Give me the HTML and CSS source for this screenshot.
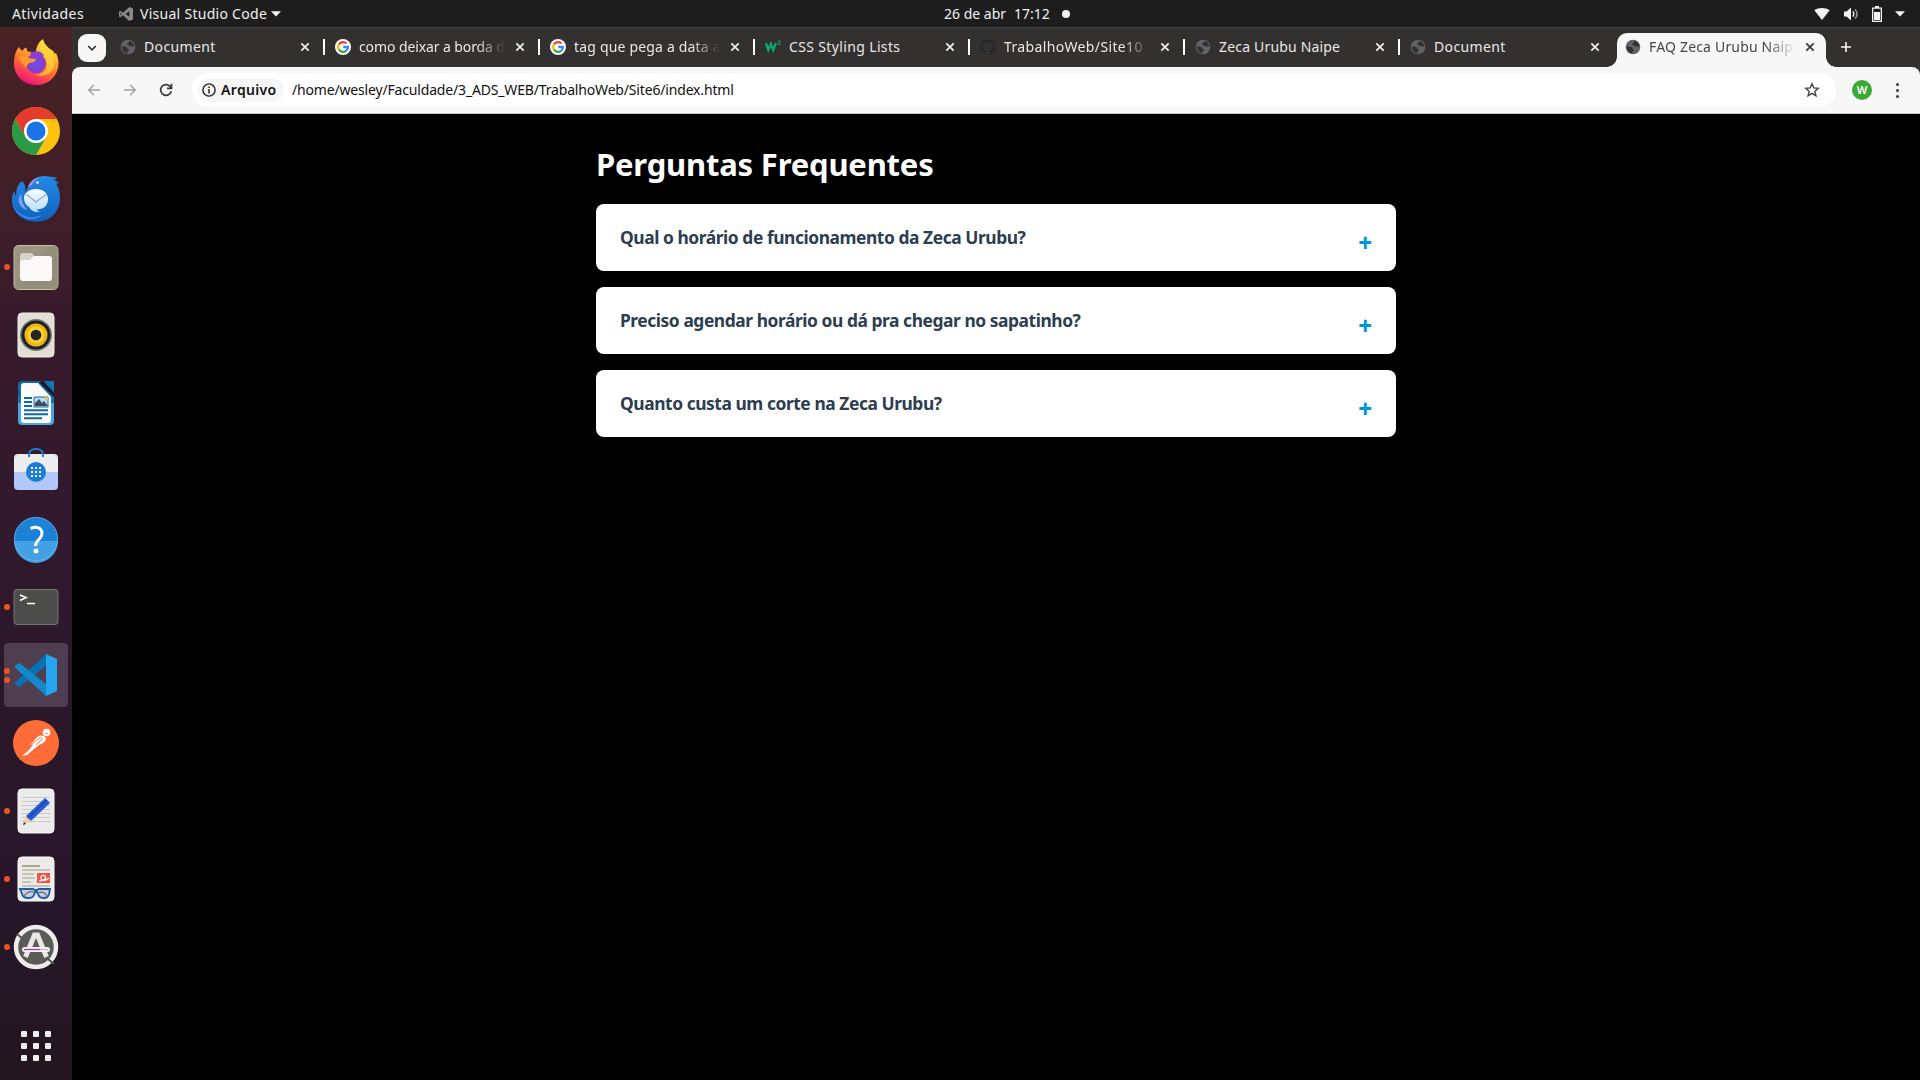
FILE: index.html
```html
<!DOCTYPE html>
<html lang="pt-BR">
<head>
<meta charset="utf-8">
<title>FAQ Zeca Urubu Naipe</title>
<link rel="stylesheet" href="styles.css">
</head>
<body>
<svg class="defs" width="0" height="0">
  <symbol id="globe" viewBox="0 0 16 16"><circle cx="8" cy="8" r="7.300" fill="currentColor"/><path class="land" d="M1.900 7.600C4 7.200 5.800 7.400 7 8.400c.8.800.2 1.500 1.300 1.800 1.300.4 1 1.500-.2 1.800-.9.200-.6 1.200-.9 2.200C4 14 1.800 11.300 1.900 7.600z"/><path class="land" d="M9.700 2.100C12.300 2.800 14 5 14.200 7.400c-.9.500-1.700.3-2.300-.4-.9.700-2.200.700-2.900-.4-.3-.7-1.600-.2-1.900-1.200-.3-1.100.9-1.100 1.400-1.700.5-.5.300-1 1.200-1.600z"/></symbol>
  <symbol id="close" viewBox="0 0 10 10"><path d="M1.300 1.300l7.400 7.400M8.700 1.300l-7.400 7.400" stroke="currentColor" stroke-width="1.700" fill="none"/></symbol>
  <symbol id="google" viewBox="0 0 16 16"><circle cx="8" cy="8" r="8" fill="#fff"/><g fill="none" stroke-width="2.300"><path d="M4 5.300A4.900 4.900 0 0 1 11.500 4.500" stroke="#ea4335"/><path d="M4 5.300a4.900 4.900 0 0 0 0 5.400" stroke="#fbbc05"/><path d="M4 10.700a4.900 4.900 0 0 0 7.300.900" stroke="#34a853"/><path d="M11.300 11.600A4.900 4.900 0 0 0 12.900 8H8.200" stroke="#4285f4"/></g></symbol>
</svg>

<header class="topbar">
  <span class="activities">Atividades</span>
  <div class="app-menu">
    <svg width="16" height="16" viewBox="0 0 16 16"><path d="M11.300 1L15 2.500v11L11.300 15 5 9.200 2.300 11.300 1 10.600V5.400l1.300-.700L5 6.800zM11.300 5.200L7.500 8l3.800 2.800zM2.400 6.500v3L3.900 8z" fill="#8a8a8a" fill-rule="evenodd"/></svg>
    <span class="app-name">Visual Studio Code</span>
    <svg width="10" height="6" viewBox="0 0 10 6"><path d="M0 .3h10L5 5.500z" fill="#f2f2f2"/></svg>
  </div>
  <div class="clock"><span class="date">26 de abr</span><span class="time">17:12</span><i class="notice"></i></div>
  <div class="status">
    <svg width="16" height="14" viewBox="0 0 16 14"><path d="M.3 3.300C4.500.100 11.500.100 15.700 3.300L8 13z" fill="#f2f2f2"/></svg>
    <svg width="16" height="14" viewBox="0 0 16 14"><path d="M1 4.500h2.500L8 .6v12.800L3.500 9.500H1z" fill="#f2f2f2"/><path d="M9.800 4.300c1.300 1.600 1.300 3.800 0 5.400" stroke="#f2f2f2" stroke-width="1.300" fill="none"/><path d="M12 2.300c2.500 2.900 2.500 6.500 0 9.400" stroke="#a5a5a5" stroke-width="1.300" fill="none"/></svg>
    <svg width="10" height="16" viewBox="0 0 10 16"><path d="M3 0h4v1.500h3V16H0V1.500h3zM1.300 2.800v11.900h7.400V2.800z" fill="#f2f2f2" fill-rule="evenodd"/><path d="M2 6h6v8H2z" fill="#f2f2f2"/></svg>
    <svg width="10" height="6" viewBox="0 0 10 6"><path d="M0 .3h10L5 5.500z" fill="#f2f2f2"/></svg>
  </div>
</header>

<div class="desktop">
<nav class="dock">
  <div class="app"><svg width="48" height="48" viewBox="0 0 48 48">
    <defs><linearGradient id="ff" x1=".8" y1="0" x2=".35" y2="1"><stop offset="0" stop-color="#fff44f"/><stop offset=".35" stop-color="#ffb32c"/><stop offset=".62" stop-color="#ff6a30"/><stop offset="1" stop-color="#f0107c"/></linearGradient><radialGradient id="ffc" cx=".5" cy=".55" r=".6"><stop offset="0" stop-color="#6a50e8"/><stop offset="1" stop-color="#9a35c0"/></radialGradient></defs>
    <path d="M7 8c1 2 2.500 3 3.500 4 .5-2 2-3 4-3.600 0 2 .5 3.200 1.500 4.200l8 1C24 8 26.500 3 31 0c1 5 4 7 7 10 2 1 4 2 4.500 5l1.500-1c2 4 3 9 2.300 13C45 38 36 46 24.500 46 11 46 2 36 2 24.500 2 17 4 11 7 8z" fill="url(#ff)"/>
    <circle cx="24" cy="24.500" r="10" fill="url(#ffc)"/>
    <path d="M18 14c5-3 12-2 15 3l-3-.5 2 3c-4-3-8-3.500-12-2z" fill="#8c3bd6"/>
    <path d="M7 17c4-1.500 8 0 11 2.500l6 .5c0 2-2 3-6 4-2 .6-3 2-3.500 4.500C11 26 8 23 7 17z" fill="#ff9a28"/>
    <path d="M31 1c-3 4-4 7-2 11 1 3 5 6 6 12 .5 8-6 13-13 11 8 4 18 1 20-8 1-6-1-10-4-14-2-4-6-6-7-12z" fill="#ffd93c" opacity=".7"/></svg></div>
  <div class="app"><svg width="48" height="48" viewBox="0 0 48 48"><circle cx="24" cy="24" r="24" fill="#ffc20e"/><path d="M3.200 12A24 24 0 0 0 24 48L34.400 30 24 24 13.600 30z" fill="#2a9a47"/><path d="M24 12h20.800A24 24 0 0 0 3.200 12l10.400 18z" fill="#e33b2e"/><circle cx="24" cy="24" r="12" fill="#fff"/><circle cx="24" cy="24" r="9.500" fill="#1a73e8"/></svg></div>
  <div class="app"><svg width="48" height="48" viewBox="0 0 48 48">
    <defs><linearGradient id="tb" x1="0" y1="0" x2="0" y2="1"><stop offset="0" stop-color="#2489e4"/><stop offset="1" stop-color="#1062bd"/></linearGradient><linearGradient id="tbe" x1="0" y1="0" x2="0" y2="1"><stop offset="0" stop-color="#fafdff"/><stop offset="1" stop-color="#b5defb"/></linearGradient></defs>
    <path d="M16 12C18 5 25 1 32 1c5 0 9 1 13 2-1 1-2 1.500-4 1.500 3 1 5 3 6 4h-3c2 3 4 8 4 14 0 14-9 24-23 24C11 47 1 38 0 27c-.5-6 1-9 2-11l2 5C4 13 7 8 10 6c3 3 5 8 2 14z" fill="url(#tb)"/><path d="M1 30c5 11 17 15 29 10-8 8-25 4-29-10z" fill="#3a8cec"/><path d="M16 12c2-5 6-9 13-10-5 2-7 4-9 8z" fill="#b18be8"/><path d="M6.500 24c1-3 2-4 3-5 0 7 2 12 6 16-5-1-9-5-9-11z" fill="#7d9cf3"/>
    <circle cx="25.500" cy="7.500" r="1.300" fill="#e8f5ff"/><path d="M12 23c0-5 5-9 12-9s12 4 12 10c0 7-5 10.500-11 10.500 0 1 1.500 2 3 2.500-6 .5-9-1.500-11-5-3-1.500-5-5-5-9z" fill="url(#tbe)"/><path d="M14 19l10 8 11-8" fill="none" stroke="#8eaac9" stroke-width="1.100"/></svg></div>
  <div class="app one"><svg width="48" height="48" viewBox="0 0 48 48"><rect x="2" y="2.500" width="44" height="44" rx="4.500" fill="#9d9582" stroke="#c5bdab"/><path d="M3 40L38 3h5q3 0 3 3v37q0 3-3 3H6q-3 0-3-3z" fill="#8c8574" opacity=".45"/><path d="M8 13q0-3 3-3h8q2 0 3 3l2 3v8H8z" fill="#d7d3c8"/><path d="M8 20q0-3 3-3h7l4-4h15q3 0 3 3v19q0 3-3 3H11q-3 0-3-3z" fill="#faf9f7"/></svg></div>
  <div class="app"><svg width="48" height="48" viewBox="0 0 48 48"><rect x="6" y="2" width="36" height="44" rx="4" fill="#e3dfd4" stroke="#f2efea"/><circle cx="24" cy="24" r="16" fill="#777b82"/><circle cx="24" cy="24" r="14.500" fill="#202027"/><circle cx="24" cy="24" r="11.500" fill="#edb70f"/><circle cx="24" cy="24" r="8.500" fill="#f6cf3a"/><circle cx="24" cy="24" r="5.300" fill="#252527"/></svg></div>
  <div class="app"><svg width="48" height="48" viewBox="0 0 48 48"><path d="M10 2h29q3 0 3 3v16H6V6q0-4 4-4z" fill="#1268a0"/><path d="M6 24h36v18q0 4-4 4H10q-4 0-4-4z" fill="#46a8d8"/><path d="M6 18h36v6H6z" fill="#1775ad"/><path d="M9 7q0-3 3-3h14l13 14v23q0 3-3 3H12q-3 0-3-3z" fill="#fbfbfb"/><path d="M27 3l15 15v-4L31 2z" fill="#1b1520"/><path d="M33 2h9v9z" fill="#1675ad"/><path d="M12 19h8M12 23h8M12 27h8M12 31.300h24M12 35.300h24M12 39.300h18" stroke="#1269a2" stroke-width="2"/><path d="M22 18h14v10H22z" fill="#b6dcfa" stroke="#176ca6"/><path d="M23 27v-3l4-4 3 4 2-2 4 5z" fill="#454b55"/><path d="M32 18h4v4z" fill="#f4b928"/></svg></div>
  <div class="app"><svg width="48" height="48" viewBox="0 0 48 48"><path d="M2 25V11q0-4 4-4h36q4 0 4 4v14z" fill="#eeeded"/><path d="M2 25h44v14q0 4-4 4H6q-4 0-4-4z" fill="#b3c8fa"/><path d="M17 10V8q0-6 7-6t7 6v2" fill="none" stroke="#1c7fd3" stroke-width="1.900"/><circle cx="24" cy="25" r="10" fill="#1c7fd3"/><path d="M19 21h10M19 25h10M19 29h10" stroke="#fff" stroke-width="2" stroke-dasharray="2 2.100"/></svg></div>
  <div class="app"><svg width="48" height="48" viewBox="0 0 48 48"><circle cx="24" cy="24" r="22" fill="#1b82d5"/><path d="M2 26h44a22 22 0 0 1-44 0z" fill="#42a0e3"/><circle cx="24" cy="24" r="21.600" fill="none" stroke="#6fb8ec" stroke-width=".7"/><path d="M18.500 13.500c6-2.500 11.500-1 11.500 5 0 6-6.500 6-6.500 12.500" fill="none" stroke="#fff" stroke-width="3"/><circle cx="24" cy="36" r="2.500" fill="#fff"/></svg></div>
  <div class="app one"><svg width="48" height="48" viewBox="0 0 48 48"><rect x="2" y="6.500" width="44" height="35" rx="3" fill="#4c4c4a" stroke="#747472"/><path d="M8 12l6 2.500L8 17.500" fill="none" stroke="#fff" stroke-width="1.700"/><path d="M15 20.500h8" stroke="#fff" stroke-width="1.500"/></svg></div>
  <div class="app two active"><svg width="48" height="48" viewBox="0 0 48 48"><path d="M3 31.500L34 3v12L8 35.500q-1 1-2.200 0L3 33q-.8-.8 0-1.500z" fill="#0871b4"/><path d="M3 16.500L34 45V33L8 12.500q-1-1-2.200 0L3 15q-.8.800 0 1.500z" fill="#1488cd"/><path d="M34 3l11 5v32l-11 5z" fill="#27a4f0"/></svg></div>
  <div class="app"><svg width="48" height="48" viewBox="0 0 48 48"><circle cx="24" cy="24" r="23" fill="#ff6c37"/><circle cx="34.500" cy="13.500" r="3.800" fill="#fff"/><path d="M32 17c-5-2-8 2-10 5l-4 4 3 0-5 6-6 5 5-1 7-6 5-4 4-2c3-2 4-5 1-7z" fill="#fff"/><path d="M19 26l10-8M24 26l7-7M33 14l3 1" stroke="#ff6c37" stroke-width=".9"/></svg></div>
  <div class="app one"><svg width="48" height="48" viewBox="0 0 48 48"><rect x="6" y="2" width="36" height="44" rx="4" fill="#ebebea" stroke="#fafafa"/><path d="M10 10.500h28M10 14.500h28M10 18.500h28M10 22.500h28M10 26.500h28M10 30.500h28M10 34.500h28" stroke="#c9c9c9"/><path d="M11 38l3-9 5 5z" fill="#f5c9a2"/><path d="M14 29l19-18 5 5-19 18z" fill="#2c5cd8"/><path d="M16 31l19-18" stroke="#1746ae" stroke-width="1.500"/><path d="M11 38l1-3 2 2z" fill="#333"/></svg></div>
  <div class="app one"><svg width="48" height="48" viewBox="0 0 48 48"><rect x="6" y="2" width="36" height="44" rx="4" fill="#ecebe8" stroke="#fafafa"/><path d="M10 11h18" stroke="#aaa48f" stroke-width="2"/><path d="M10 15h28M10 19h12M10 23h13M10 27h9M10 31h28" stroke="#c7c3b8" stroke-width="2"/><path d="M25 18h13v10H25z" fill="#f35244"/><path d="M27 26c5 0 8-3 6-5-3-2-5 1-4 3s5 2 8-1" fill="none" stroke="#fff" stroke-width="1.200"/><path d="M8 34h13l2 1h2l2-1h11l-1 5q-1 4-5 4t-5-2l-2-4h-2l-1 3q-1 3-6 3t-6-4z" fill="#c9cdd5" stroke="#1d5cad" stroke-width="1.800"/><path d="M12 41c3-4 7-5 10-4m4 1c4-2 7-1 9 3" fill="none" stroke="#666a70" stroke-width="1.200"/></svg></div>
  <div class="app one"><svg width="48" height="48" viewBox="0 0 48 48"><circle cx="24" cy="24" r="20" fill="#5a5a58" stroke="#eeedec" stroke-width="4.500"/><path d="M5 11l6 5M36 36l6 5" stroke="#555" stroke-width="2"/><path d="M13.500 34L22.500 12h3l9 22" fill="none" stroke="#e9e8e7" stroke-width="5"/><path d="M12.500 26.500h23" stroke="#f4f4f4" stroke-width="5" stroke-linecap="round"/><path d="M12 26.500h16" stroke="#924b98" stroke-width="1.300"/><path d="M28 26.500h8" stroke="#b8b8b8"/></svg></div>
  <div class="all-apps"><i></i><i></i><i></i><i></i><i></i><i></i><i></i><i></i><i></i></div>
</nav>

<main class="browser">
  <div class="tabs">
    <button class="tab-search"><svg width="12" height="8" viewBox="0 0 12 8"><path d="M2.200 2l3.800 3.800L9.800 2" fill="none" stroke="#333" stroke-width="1.600"/></svg></button>
    <div class="tab"><svg class="fav"><use href="#globe"/></svg><span class="title wide">Document</span><svg class="x"><use href="#close"/></svg></div>
    <div class="tab"><svg class="fav"><use href="#google"/></svg><span class="title fade snug">como deixar a borda d</span><svg class="x"><use href="#close"/></svg></div>
    <div class="tab"><svg class="fav"><use href="#google"/></svg><span class="title fade">tag que pega a data a</span><svg class="x"><use href="#close"/></svg></div>
    <div class="tab"><svg class="fav" viewBox="0 0 16 16"><path d="M1 4l2.300 7 2.600-6 2.300 6 2.700-7" fill="none" stroke="#0aa76e" stroke-width="2.400"/><path d="M12.500 2.200h2.800l-1.500 1.700q1.500 0 1.300 1.200-.5 1-2.500.3" fill="none" stroke="#0aa76e"/></svg><span class="title wide">CSS Styling Lists</span><svg class="x"><use href="#close"/></svg></div>
    <div class="tab"><svg class="fav" viewBox="0 0 16 16"><path d="M8 .3C3.600.300 0 3.900 0 8.300c0 3.500 2.300 6.500 5.500 7.600.4.100.5-.2.500-.4v-1.400c-2 .4-2.700-.5-2.900-1-.1-.3-.6-1-1-1.200-.3-.2-.8-.6 0-.6.700 0 1.200.6 1.300.9.800 1.300 2 1 2.600.7.100-.6.300-1 .6-1.200-1.800-.2-3.700-.9-3.700-3.900 0-.9.300-1.600.8-2.200-.1-.2-.3-1 .1-2.100 0 0 .7-.2 2.200.8a7.600 7.600 0 0 1 4 0c1.500-1 2.200-.8 2.200-.8.400 1.100.2 1.900.1 2.100.5.600.8 1.300.8 2.200 0 3-1.900 3.700-3.700 3.900.3.300.6.800.6 1.500v2.300c0 .2.100.5.600.4A8 8 0 0 0 8 .3z" fill="#24292f"/></svg><span class="title fade wide">TrabalhoWeb/Site10</span><svg class="x"><use href="#close"/></svg></div>
    <div class="tab"><svg class="fav"><use href="#globe"/></svg><span class="title">Zeca Urubu Naipe</span><svg class="x"><use href="#close"/></svg></div>
    <div class="tab last"><svg class="fav"><use href="#globe"/></svg><span class="title wide">Document</span><svg class="x"><use href="#close"/></svg></div>
    <div class="tab current"><svg class="fav"><use href="#globe"/></svg><span class="title fade">FAQ Zeca Urubu Naip</span><svg class="x"><use href="#close"/></svg></div>
    <svg class="new-tab" width="10" height="10" viewBox="0 0 10 10"><path d="M5 0v10M0 5h10" stroke="#f5f5f5" stroke-width="1.600"/></svg>
  </div>
  <div class="toolbar">
    <svg class="nav" viewBox="0 0 16 16"><path d="M14 8H3M8 2.800L2.800 8 8 13.200" fill="none" stroke="#a3a3a3" stroke-width="1.500"/></svg>
    <svg class="nav" viewBox="0 0 16 16"><path d="M2 8h11M8 2.800L13.200 8 8 13.200" fill="none" stroke="#a3a3a3" stroke-width="1.500"/></svg>
    <svg class="nav" viewBox="0 0 16 16"><path d="M13.300 9.200A5.400 5.400 0 1 1 12 4.300l1.300 1.400M13.500 1.700v4.600H9" fill="none" stroke="#3a3a3a" stroke-width="1.700"/></svg>
    <div class="address">
      <div class="chip"><svg width="14" height="14" viewBox="0 0 14 14"><circle cx="7" cy="7" r="6.100" fill="none" stroke="#222" stroke-width="1.400"/><path d="M7 6v4.400M7 3.400v1.500" stroke="#222" stroke-width="1.500"/></svg><span class="file">Arquivo</span></div>
      <span class="url">/home/wesley/Faculdade/3_ADS_WEB/TrabalhoWeb/Site6/index.html</span>
      <svg class="star" width="16" height="16" viewBox="0 0 16 16"><path d="M8 1.800l1.800 4.100 4.500.4-3.400 3 1 4.400L8 11.400l-3.900 2.300 1-4.400-3.400-3 4.500-.4z" fill="none" stroke="#444" stroke-width="1.400"/></svg>
    </div>
    <span class="avatar">W</span>
    <div class="menu"><i></i><i></i><i></i></div>
  </div>
  <section class="page">
    <div class="faq">
      <h1>Perguntas Frequentes</h1>
      <article class="card"><h2>Qual o horário de funcionamento da Zeca Urubu?</h2><span class="plus">+</span></article>
      <article class="card"><h2>Preciso agendar horário ou dá pra chegar no sapatinho?</h2><span class="plus">+</span></article>
      <article class="card"><h2>Quanto custa um corte na Zeca Urubu?</h2><span class="plus">+</span></article>
    </div>
  </section>
</main>
</div>
</body>
</html>
```
FILE: styles.css
```css
* { box-sizing: border-box; }
body {
  margin: 0;
  height: 1080px;
  overflow: hidden;
  display: flex;
  flex-direction: column;
  background: #000;
  font: 14px/20px "Noto Sans", sans-serif;
}
svg { display: block; flex: none; }
.defs { display: none; }

.topbar {
  height: 27px;
  flex: none;
  display: grid;
  grid-template-columns: 118px 826px 1fr auto;
  align-items: center;
  background: #1d1d1d;
  color: #f0f0f0;
  white-space: nowrap;
}
.activities { padding-left: 12px; letter-spacing: .4px; }
.app-menu { display: flex; align-items: center; }
.app-name { margin: 0 4px 0 6px; letter-spacing: .28px; }
.clock { display: flex; align-items: center; }
.time { margin-left: 8px; }
.notice { width: 8px; height: 8px; margin-left: 12px; border-radius: 50%; background: #f2f2f2; }
.status { display: flex; align-items: center; gap: 13px; padding-right: 15px; }

.desktop { flex: 1; display: flex; min-height: 0; }
.dock {
  width: 72px;
  flex: none;
  display: flex;
  flex-direction: column;
  align-items: center;
  padding-top: 2px;
  background: linear-gradient(#482224, #421f26 12%, #381b2b 27%, #33192e 45%, #2b172a 65%, #26162a 85%, #23161d);
}
.app { position: relative; width: 64px; height: 64px; margin: 2px 0; display: flex; align-items: center; justify-content: center; flex: none; border-radius: 4px; }
.app.active { background: #4f3d50; }
.app.one::before, .app.two::before {
  content: "";
  position: absolute;
  left: 0;
  top: 29px;
  width: 6px;
  height: 6px;
  border-radius: 50%;
  background: #e95420;
}
.app.two::before { top: 25px; box-shadow: 0 9px #e95420; }
.all-apps { margin-top: 50px; display: grid; grid-template-columns: repeat(3, 6px); gap: 6px; }
.all-apps i { height: 6px; border-radius: 1px; background: #f1f0ef; }

.browser { flex: 1; min-width: 0; display: flex; flex-direction: column; background: #33312f; }
.tabs { height: 40px; flex: none; display: flex; align-items: center; border-top: 1px solid #45433f; padding-left: 6px; color: #e8e8e8; }
.tab-search { width: 28px; height: 28px; padding: 0; margin-right: 4px; border: 0; border-radius: 9px; background: #f7f7f7; display: flex; align-items: center; justify-content: center; }
.tab { width: 215px; height: 34px; flex: none; display: flex; align-items: center; padding-left: 10px; padding-bottom: 1px; position: relative; }
.tab:not(.last):not(.current)::after { content: ""; position: absolute; right: 0; top: 8px; width: 2px; height: 16px; background: #fff; }
.fav { width: 16px; height: 16px; color: #5f6368; }
.land { fill: #33312f; }
.title { width: 147px; margin-left: 8px; padding-bottom: 1px; overflow: hidden; white-space: nowrap; letter-spacing: .18px; }
.title.wide { letter-spacing: .36px; }
.title.snug { letter-spacing: -.1px; }
.fade { -webkit-mask-image: linear-gradient(90deg, #000 118px, transparent 146px); mask-image: linear-gradient(90deg, #000 118px, transparent 146px); }
.x { width: 10px; height: 10px; margin-left: 9px; color: #f0f0f0; }
.current { width: 209px; margin-left: 2px; align-self: flex-end; padding: 0 0 6px 8px; border-radius: 10px 10px 0 0; background: #f7f7f7; color: #454545; }
.current .x { color: #3a3a3a; }
.current .land { fill: #f7f7f7; }
.current::before, .current::after { content: ""; position: absolute; bottom: 0; width: 10px; height: 10px; }
.current::before { left: -10px; background: radial-gradient(circle at 0 0, transparent 9.5px, #f7f7f7 10px); }
.current::after { right: -10px; background: radial-gradient(circle at 100% 0, transparent 9.5px, #f7f7f7 10px); }
.new-tab { margin: 0 0 2px 15px; }

.toolbar { height: 47px; flex: none; display: flex; align-items: center; padding: 0 20px 0 14px; background: #f7f7f7; border-bottom: 1px solid #c6c6c6; border-radius: 8px 8px 0 0; }
.nav { width: 16px; height: 16px; margin-right: 20px; }
.address { flex: 1; height: 34px; display: flex; align-items: center; margin: 0 16px 0 -2px; padding: 0 16px 0 6px; border-radius: 17px; background: #fff; color: #111; }
.chip { width: 86px; height: 24px; display: flex; align-items: center; gap: 5px; padding-left: 4px; margin-right: 8px; border-radius: 12px; background: #f6f6f6; }
.file { font-weight: 600; letter-spacing: .35px; }
.url { letter-spacing: -.17px; }
.star { margin-left: auto; }
.avatar { width: 20px; height: 20px; border-radius: 50%; background: #3aa935; color: #fff; font-size: 11px; font-weight: 600; text-align: center; margin-right: 24px; }
.menu { width: 4px; display: grid; gap: 3px; }
.menu i { width: 3px; height: 3px; border-radius: 50%; background: #3c3c3c; }

.page { flex: 1; background: #000; }
.faq { width: 800px; margin: 0 auto; padding-top: 31px; }
h1 { margin: 0 0 21px; color: #fff; font-size: 31px; line-height: 38px; font-weight: 700; letter-spacing: -.2px; }
.card { height: 67px; margin-bottom: 16px; padding: 0 24px; display: flex; align-items: center; justify-content: space-between; border-radius: 8px; background: #fff; }
h2 { margin: -2px 0 0; color: #2c3e50; font-size: 17.4px; line-height: 24px; font-weight: 700; letter-spacing: -.44px; }
.plus { color: #0095dd; font-size: 24px; font-weight: 800; line-height: 24px; margin-top: 10px; }
```
